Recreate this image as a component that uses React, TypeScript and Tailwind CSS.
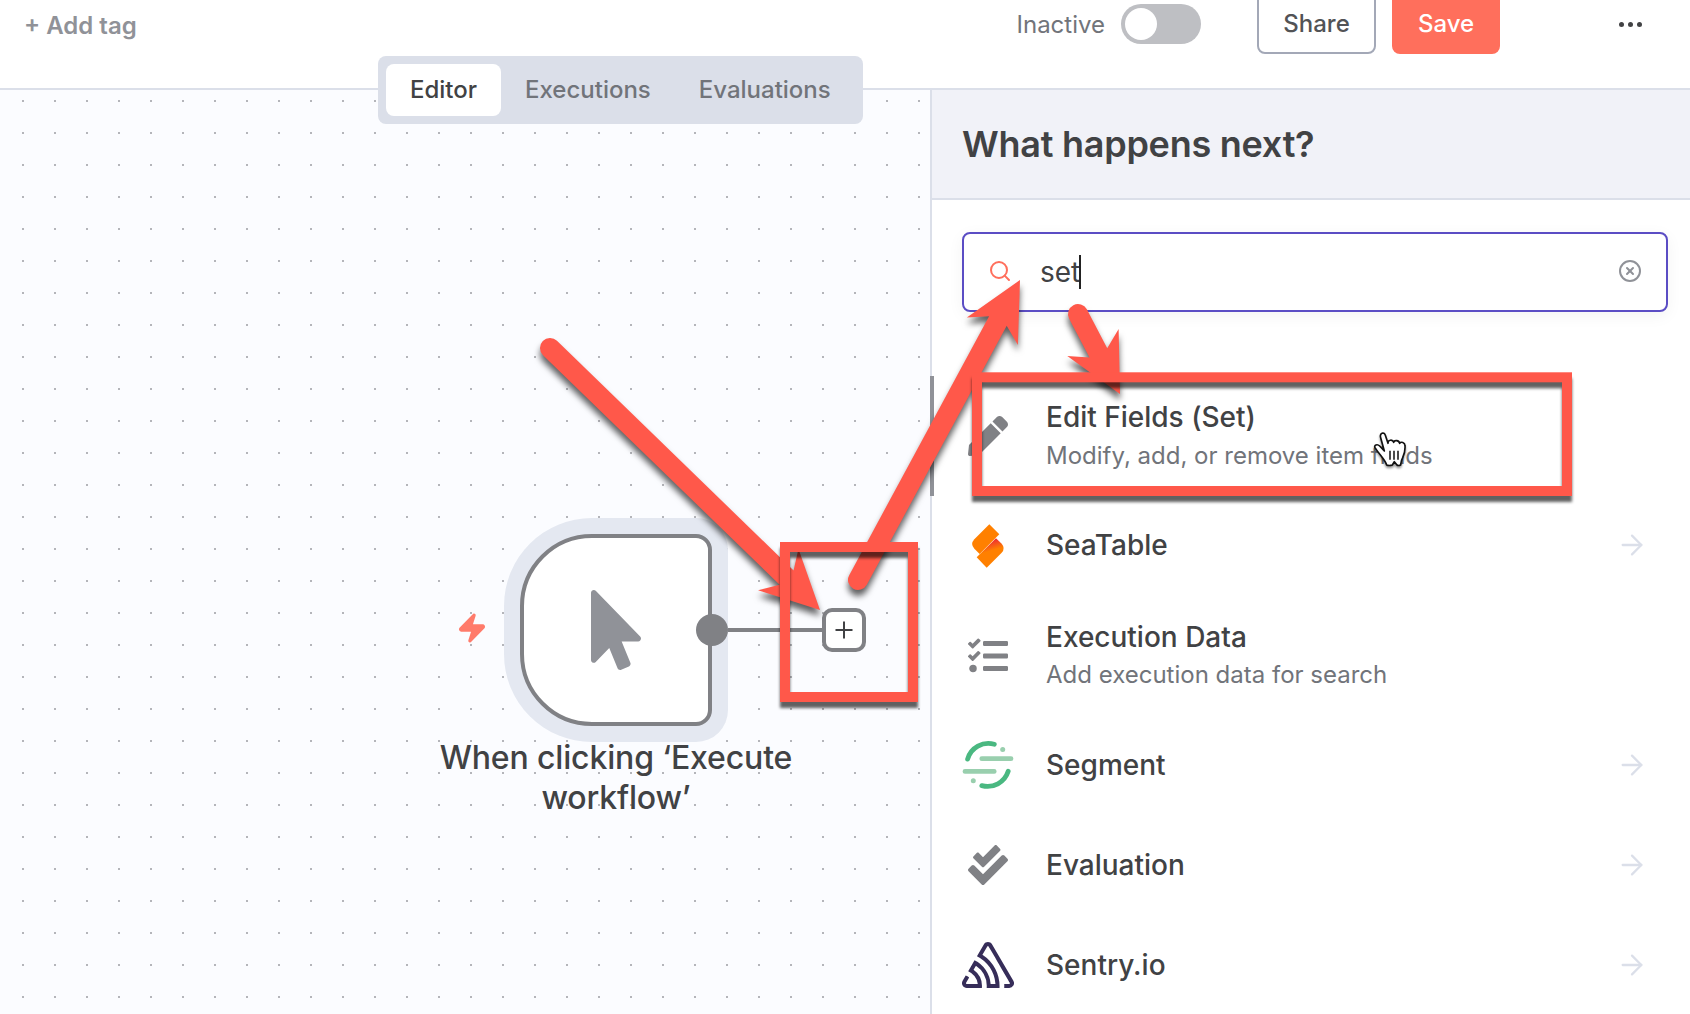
import React from "react";
import { ArrowRight, CircleX, Search, Zap } from "lucide-react";
import { FaCheckDouble, FaMousePointer, FaPen, FaTasks } from "react-icons/fa";
import { SiSentry } from "react-icons/si";

function SeaTableLogo() {
  return (
    <svg viewBox="66 57 156 156" className="size-[52px]">
      <defs>
        <linearGradient id="seatable-fold" gradientUnits="userSpaceOnUse" x1="158" y1="118" x2="170" y2="158">
          <stop offset="0" stopColor="#ec2837" />
          <stop offset="0.75" stopColor="#ff8000" />
        </linearGradient>
      </defs>
      <path d="M168 115 L185 131 Q197 145 185 158 L140 203 L110 172 Z" fill="url(#seatable-fold)" />
      <path d="M148 73 L178 103 L119 162 L103 146 Q90 132 103 118 Z" fill="#ff8000" />
    </svg>
  );
}

function SegmentLogo() {
  return (
    <svg viewBox="0 -0.7 52 52" className="size-[52px]" fill="none" strokeWidth="4.8" strokeLinecap="round">
      <path d="M5.6 19.4 A21.6 21.6 0 0 1 32.3 4.6 M46.2 31.6 A21.6 21.6 0 0 1 19.8 45.9" stroke="#4ab881" />
      <path d="M19.8 19 H49 M3 31.7 H32.2" stroke="#99cfae" />
      <circle cx="40.7" cy="9.7" r="2.5" fill="#99cfae" />
      <circle cx="11.3" cy="41" r="2.5" fill="#99cfae" />
    </svg>
  );
}

type Item = { title: string; sub?: string; icon: React.ReactNode; arrow?: boolean; row: string; gap?: string };

const items: Item[] = [
  {
    title: "Edit Fields (Set)",
    sub: "Modify, add, or remove item fields",
    icon: <FaPen className="size-10" />,
    row: "h-[119px] pt-px",
    gap: "mt-1",
  },
  { title: "SeaTable", icon: <SeaTableLogo />, arrow: true, row: "h-[100px]" },
  {
    title: "Execution Data",
    sub: "Add execution data for search",
    icon: <FaTasks className="size-10" />,
    row: "h-[120px] pt-px",
    gap: "mt-[3px]",
  },
  { title: "Segment", icon: <SegmentLogo />, arrow: true, row: "h-[100px]" },
  { title: "Evaluation", icon: <FaCheckDouble className="size-10" />, arrow: true, row: "h-[100px]" },
  { title: "Sentry.io", icon: <SiSentry className="size-[52px] text-[#362d59]" />, arrow: true, row: "h-[100px]" },
];

function ItemRow({ item }: { item: Item }) {
  return (
    <div className={`flex shrink-0 items-center ${item.row}`}>
      <div className="flex w-[52px] justify-center text-[#808185]">{item.icon}</div>
      <div className="ml-8 flex-1 whitespace-nowrap">
        <div className="text-[28px] leading-9 font-medium text-[#414244]">{item.title}</div>
        {item.sub && <div className={`text-[24px] leading-[34px] text-[#71747a] ${item.gap}`}>{item.sub}</div>}
      </div>
      {item.arrow && <ArrowRight className="mr-5 size-8 text-[#dbdfe9]" strokeWidth={1.7} />}
    </div>
  );
}

function Arrow({ x1, y1, x2, y2 }: { x1: number; y1: number; x2: number; y2: number }) {
  const length = Math.hypot(x2 - x1, y2 - y1);
  const angle = (Math.atan2(y2 - y1, x2 - x1) * 180) / Math.PI;
  const n = length - 46.5;
  const b = length - 58.2;
  return (
    <g filter="url(#arrow-shadow)">
      <path
        transform={`translate(${x1} ${y1}) rotate(${angle})`}
        d={`M0 -10 H${n} L${b} -29 L${length} 0 L${b} 29 L${n} 10 H0 A10 10 0 0 1 0 -10 Z`}
      />
    </g>
  );
}

function Annotations() {
  return (
    <svg viewBox="0 0 1690 1014" className="pointer-events-none absolute inset-0 h-[1014px] w-[1690px]">
      <defs>
        <filter id="arrow-shadow" filterUnits="userSpaceOnUse" x="0" y="0" width="1690" height="1014" colorInterpolationFilters="sRGB">
          <feDropShadow dx="0" dy="6" stdDeviation="3" floodColor="#000" floodOpacity="0.62" />
        </filter>
        <filter id="box-shadow" filterUnits="userSpaceOnUse" x="0" y="0" width="1690" height="1014" colorInterpolationFilters="sRGB">
          <feDropShadow dx="0" dy="6" stdDeviation="1.5" floodColor="#000" floodOpacity="0.62" />
        </filter>
      </defs>
      <g fill="#ff584a">
        <Arrow x1={550} y1={348} x2={820} y2={610} />
        <Arrow x1={858} y1={580} x2={1020} y2={280} />
        <Arrow x1={1078} y1={314} x2={1120} y2={394} />
      </g>
      <g fill="none" stroke="#ff584a" strokeWidth="10">
        <rect x="785" y="547" width="128" height="150" filter="url(#box-shadow)" />
        <rect x="977" y="377.3" width="590" height="113.7" filter="url(#box-shadow)" />
      </g>
    </svg>
  );
}

function HandCursor() {
  return (
    <svg
      viewBox="127 661 108 117"
      className="absolute top-[430px] left-[1372px] h-[39px] w-9 drop-shadow-[0_2px_1px_rgba(0,0,0,0.4)]"
    >
      <path
        d="M153 684 C149 670 163 665 167 677 L175 701 C174 690 189 688 192 698 C194 690 208 691 210 701 C214 695 226 698 226 708 C227 724 225 732 219 744 C214 753 214 758 213 766 Q206 769 202 766 L194 756 L188 766 Q178 769 171 766 C166 750 150 736 136 714 C132 706 143 702 150 709 L164 724 Z"
        fill="#fff"
        stroke="#111"
        strokeWidth="5"
        strokeLinejoin="round"
      />
      <path d="M181 723 V750 M193 723 V750 M205 723 V750" stroke="#111" strokeWidth="4.5" />
    </svg>
  );
}

export default function App() {
  return (
    <div className="relative flex h-[1014px] w-[1690px] flex-col overflow-hidden bg-white font-['Inter',sans-serif]">
      <header className="h-[90px] shrink-0 border-b-2 border-[#dbdfe9] bg-white">
        <div className="flex h-[46px] items-center pr-[47px] pl-6 text-[24px] leading-8 font-medium whitespace-nowrap">
          <span className="mt-1.5 font-semibold text-[#909298]">+ Add tag</span>
          <span className="mt-1 ml-auto font-normal text-[#71747a]">Inactive</span>
          <div className="mt-0.5 ml-4 flex h-10 w-20 shrink-0 items-center rounded-full bg-[#bebfc3] px-1">
            <div className="size-8 rounded-full bg-white" />
          </div>
          <button className="ml-14 h-[62px] w-[119px] shrink-0 rounded-lg border-2 border-[#a3a8b7] pt-0.5 text-[#525356]">
            Share
          </button>
          <button className="ml-4 h-[62px] w-[108px] shrink-0 rounded-lg bg-[#ff6f5c] pt-0.5 text-white">Save</button>
          <div className="mt-0.5 ml-[118px] flex gap-1 px-px">
            <i className="size-[5px] rounded-full bg-[#414244]" />
            <i className="size-[5px] rounded-full bg-[#414244]" />
            <i className="size-[5px] rounded-full bg-[#414244]" />
          </div>
        </div>
      </header>

      <main className="flex min-h-0 flex-1">
        <section className="relative w-[930px] shrink-0 bg-[#fbfcff] bg-[conic-gradient(from_270deg_at_2px_2px,#b4b5ba_90deg,transparent_0)] bg-[size:32px_32px] bg-[position:22px_10px]">
          <Zap className="absolute top-[522px] left-[456px] size-8 fill-[#ff7b6b] text-[#ff7b6b]" strokeWidth={1.6} />
          <div className="absolute top-[444px] left-[520px] flex size-[192px] items-center justify-center rounded-l-[72px] rounded-r-2xl border-4 border-[#808185] bg-white shadow-[0_0_0_16px_#e4e8f1]">
            <FaMousePointer className="h-20 w-[50px] text-[#909298]" />
          </div>
          <div className="absolute top-[538px] left-[728px] h-1 w-[94px] bg-[#808185]" />
          <div className="absolute top-[524px] left-[696px] size-8 rounded-full bg-[#808185]" />
          <div className="absolute top-[518px] left-[822px] flex size-11 items-center justify-center rounded-[10px] border-4 border-[#808185] bg-white">
            <svg viewBox="0 0 18 18" className="size-[18px]">
              <path d="M9 0.5 V17.5 M0.5 9 H17.5" stroke="#414244" strokeWidth="2" />
            </svg>
          </div>
          <div className="absolute top-[648px] left-[416px] w-[400px] text-center text-[32px] leading-10 font-medium tracking-[-0.15px] text-[#414244]">
            When clicking ‘Execute workflow’
          </div>
        </section>

        <aside className="relative flex min-w-0 flex-1 flex-col border-l-2 border-[#dbdfe9] bg-white">
          <div className="absolute top-[286px] -left-0.5 h-[120px] w-1 bg-[#909298]" />
          <h1 className="flex h-[110px] shrink-0 items-center border-b-2 border-[#dbdfe9] bg-[#f1f2f8] pl-[30px] text-[36px] font-semibold tracking-[-0.25px] text-[#414244]">
            What happens next?
          </h1>
          <div className="flex flex-col pr-[22px] pl-[30px]">
            <div className="mt-8 flex h-20 shrink-0 items-center rounded-lg border-2 border-[#5b4dc4] bg-white px-6 shadow-[0_4px_16px_rgba(0,0,0,0.05)]">
              <Search className="mb-0.5 size-6 text-[#ff6f5c]" strokeWidth={2} />
              <span className="ml-7 text-[28px] text-[#414244]">set</span>
              <i className="-ml-px h-[34px] w-0.5 bg-[#222]" />
              <CircleX className="mb-0.5 ml-auto size-6 text-[#909298]" strokeWidth={2} />
            </div>
            <div className="mt-16 flex flex-col">
              {items.map((item) => (
                <ItemRow key={item.title} item={item} />
              ))}
            </div>
          </div>
        </aside>
      </main>

      <nav className="absolute top-14 left-[378px] flex h-[68px] w-[485px] items-center rounded-lg bg-[#dbdfe9] p-2 text-[24px] font-medium text-[#71747a]">
        <span className="flex h-[52px] w-[115px] items-center justify-center rounded-lg bg-white text-[#414244]">Editor</span>
        <span className="ml-6">Executions</span>
        <span className="ml-12">Evaluations</span>
      </nav>

      <Annotations />
      <HandCursor />
    </div>
  );
}
